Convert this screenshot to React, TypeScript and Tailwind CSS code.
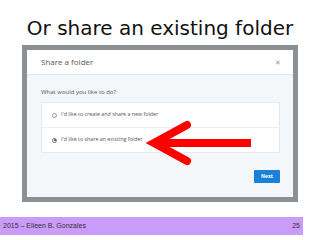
import React from "react";

export default function App() {
  return (
    <div className="relative w-[320px] h-[240px] bg-white overflow-hidden" style={{ fontFamily: "'Liberation Sans', Arial, sans-serif" }}>
      <div className="h-[45px] flex items-start justify-center pt-[15px]">
        <span className="text-[20px] leading-[26px] text-[#111]" style={{ fontFamily: "'DejaVu Sans', sans-serif" }}>Or share an existing folder</span>
      </div>
      <div className="ml-[22px] w-[276px] h-[157px] border-[5px] border-[#8b9095] bg-white flex flex-col" style={{ fontFamily: "'Open Sans', sans-serif" }}>
        <div className="h-[25px] flex items-center justify-between pl-[14px] pr-[12px] border-b border-[#e3e7eb]">
          <span className="text-[8px] text-[#555]">Share a folder</span>
          <span className="text-[7px] text-[#999] leading-none">✕</span>
        </div>
        <div className="flex-1 bg-[#f4f7fa] flex flex-col pl-[14px] pr-[13px]">
          <div className="h-[27px] flex items-center pt-[8px] text-[6px] text-[#555]">What would you like to do?</div>
          <div className="bg-white border border-[#e6e9ed] flex flex-col h-[51px]">
            <div className="flex-1 flex items-center pl-[10px] gap-[4px] border-b border-[#eceff2]">
              <span className="w-[5px] h-[5px] rounded-full border border-[#999] bg-white" />
              <span className="text-[5.3px] text-[#555]">I'd like to create and share a new folder</span>
            </div>
            <div className="flex-1 flex items-center pl-[10px] gap-[4px]">
              <span className="w-[5px] h-[5px] rounded-full border border-[#777] bg-white flex items-center justify-center">
                <span className="w-[2px] h-[2px] rounded-full bg-[#444]" />
              </span>
              <span className="text-[5.3px] text-[#555]">I'd like to share an existing folder</span>
            </div>
          </div>
          <div className="flex justify-end mt-[17px]">
            <div className="w-[26px] h-[13px] bg-[#1b80d8] rounded-[1px] flex items-center justify-center text-[5px] font-bold text-white">Next</div>
          </div>
        </div>
      </div>
      <div className="mt-[15px] w-[303px] h-[18px] bg-[#c99cf9] flex items-center justify-between px-[3px] text-[7px] text-[#333]">
        <span>2015 – Eileen B. Gonzales</span>
        <span>25</span>
      </div>
      <svg className="absolute left-0 top-0" width="320" height="240" viewBox="0 0 320 240">
        <path d="M251 143 L160 143" stroke="#ff0000" strokeWidth="8" fill="none" />
        <path d="M187 125 L154 143 L187 161" stroke="#ff0000" strokeWidth="8" strokeLinecap="round" strokeLinejoin="miter" fill="none" />
      </svg>
    </div>
  );
}
